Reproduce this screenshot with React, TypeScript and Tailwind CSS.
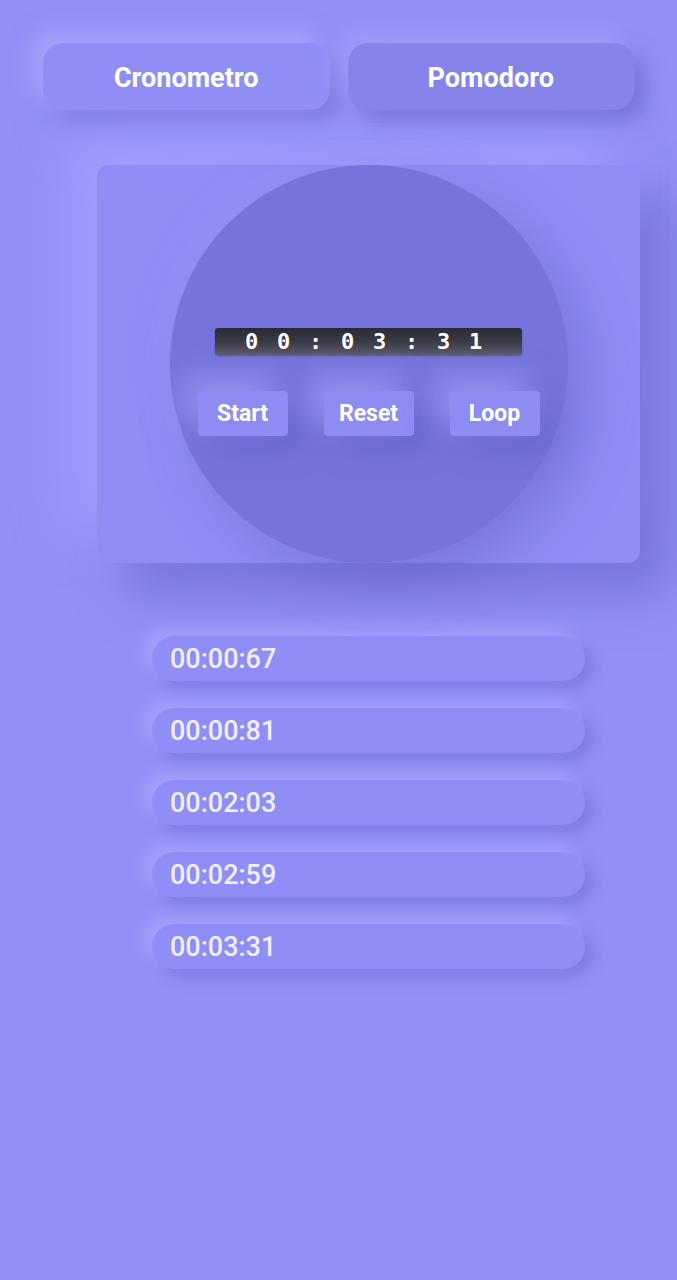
import React from 'react';

const laps = ['00:00:67', '00:00:81', '00:02:03', '00:02:59', '00:03:31'];

function ActionButton({ label }: { label: string }) {
  return (
    <button className="w-[90px] h-[45px] pt-[2px] rounded-[4px] bg-[#8e8bf4] text-white text-[23px] font-bold shadow-[-14px_-14px_28px_rgba(170,168,255,0.55),14px_14px_28px_rgba(90,88,190,0.35)]">
      {label}
    </button>
  );
}

export default function App() {
  const time = '00:03:31';
  return (
    <div
      className="min-h-[1280px] w-full bg-[#9290f7] text-white"
      style={{ fontFamily: 'Roboto, "Liberation Sans", sans-serif' }}
    >
      {/* mode tabs */}
      <div className="flex gap-[18px] px-[43px] pt-[43px]">
        <button className="flex-1 h-[67px] pt-[3px] rounded-[20px] bg-[#908ef6] text-[27px] font-bold shadow-[-10px_-10px_22px_rgba(175,173,255,0.7),10px_10px_22px_rgba(100,98,200,0.45)]">
          Cronometro
        </button>
        <button className="flex-1 h-[67px] pt-[3px] rounded-[20px] bg-[#8683ea] text-[27px] font-bold shadow-[-10px_-10px_22px_rgba(175,173,255,0.5),10px_10px_22px_rgba(90,88,190,0.55)]">
          Pomodoro
        </button>
      </div>

      {/* timer card */}
      <div className="mt-[55px] ml-[97px] mr-[37px] h-[398px] rounded-[12px] bg-[#8f8cf6] flex justify-center shadow-[-30px_-30px_50px_rgba(170,168,255,0.55),30px_30px_50px_rgba(95,93,195,0.55)]">
        <div className="relative w-[398px] h-[398px] rounded-full bg-[#7674db] flex flex-col items-center shadow-[20px_20px_50px_rgba(95,93,195,0.45),-10px_-10px_30px_rgba(160,158,255,0.3)]">
          <div className="mt-[163px] w-[307px] h-[27px] rounded-[3px] bg-gradient-to-b from-[#2b2b34] via-[#3a3a48] to-[#5a5a6c] flex items-center pl-[30px] shadow-[0_1px_2px_rgba(0,0,0,0.3)]">
            {time.split('').map((c, i) => (
              <span
                key={i}
                className="w-[32px] text-[22px] font-black leading-none text-left text-white"
                style={{ fontFamily: '"DejaVu Sans Mono", monospace' }}
              >
                {c}
              </span>
            ))}
          </div>
          <div className="mt-[36px] flex gap-[36px]">
            <ActionButton label="Start" />
            <ActionButton label="Reset" />
            <ActionButton label="Loop" />
          </div>
        </div>
      </div>

      {/* laps */}
      <div className="mt-[73px] ml-[152px] w-[433px] flex flex-col gap-[27px]">
        {laps.map((l) => (
          <div
            key={l}
            className="h-[45px] pt-[2px] rounded-full bg-[#908df6] flex items-center pl-[18px] text-[27px] font-medium text-[#eeeeff] shadow-[-8px_-8px_16px_rgba(175,173,255,0.6),8px_8px_16px_rgba(100,98,200,0.45)]"
          >
            {l}
          </div>
        ))}
      </div>
    </div>
  );
}
